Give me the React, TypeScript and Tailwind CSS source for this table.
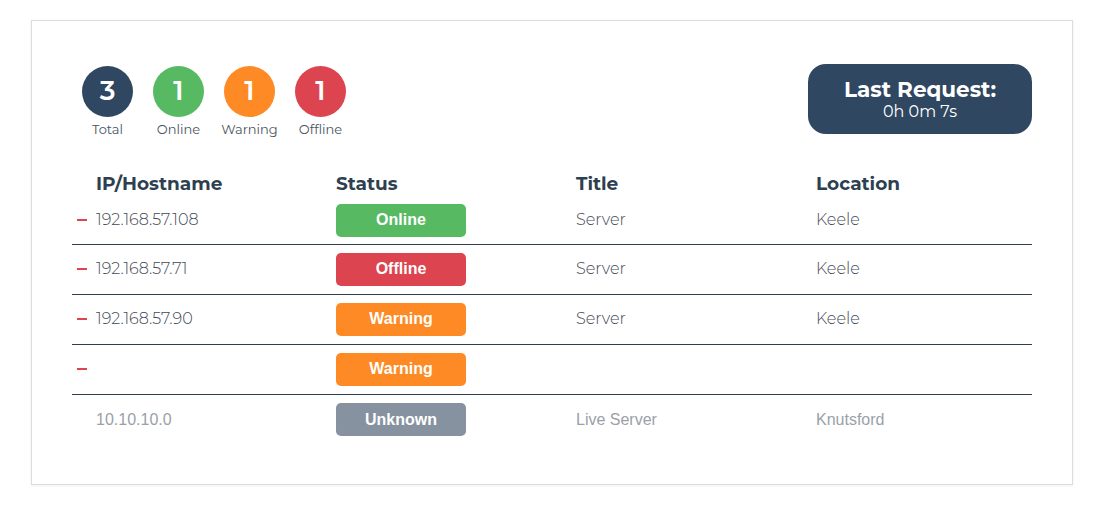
import type { ReactNode } from 'react';

type Status = 'Online' | 'Offline' | 'Warning' | 'Unknown';

type Host = { ip: string; status: Status; title: string; location: string; removable: boolean };

const hosts: Host[] = [
  { ip: '192.168.57.108', status: 'Online', title: 'Server', location: 'Keele', removable: true },
  { ip: '192.168.57.71', status: 'Offline', title: 'Server', location: 'Keele', removable: true },
  { ip: '192.168.57.90', status: 'Warning', title: 'Server', location: 'Keele', removable: true },
  { ip: '', status: 'Warning', title: '', location: '', removable: true },
  { ip: '10.10.10.0', status: 'Unknown', title: 'Live Server', location: 'Knutsford', removable: false },
];

const badge: Record<Status, string> = {
  Online: 'bg-[#57ba63]',
  Offline: 'bg-[#dc4450]',
  Warning: 'bg-[#fd8a25]',
  Unknown: 'bg-[#86929f]',
};

const heading = "font-['Montserrat','Open_Sans','Liberation_Sans',sans-serif]";
const arial = "font-['Liberation_Sans',Arial,sans-serif]";

function Counter({ value, label, color }: { value: number; label: string; color: string }) {
  return (
    <div className="flex w-[51px] flex-col items-center">
      <div className={`flex h-[51px] w-[51px] items-center justify-center rounded-full text-[27px] font-semibold text-white ${color}`}>
        {value}
      </div>
      <span className="mt-[3px] whitespace-nowrap text-[13px] text-[#4a5560]">{label}</span>
    </div>
  );
}

function Cell({ children, className = '' }: { children?: ReactNode; className?: string }) {
  return <div className={`flex items-center ${className}`}>{children}</div>;
}

export default function App() {
  return (
    <div className={`min-h-[518px] bg-white pl-[31px] pr-[31px] pt-[20px] ${heading}`}>
      <div className="h-[465px] w-[1042px] border border-[#dcdcdc] bg-white shadow-[0_1px_3px_rgba(0,0,0,0.06)]">
        <div className="flex items-start justify-between pl-[50px] pr-[40px] pt-[43px]">
          <div className="mt-[2px] flex gap-[20px]">
            <Counter value={3} label="Total" color="bg-[#2f4760]" />
            <Counter value={1} label="Online" color="bg-[#57ba63]" />
            <Counter value={1} label="Warning" color="bg-[#fd8a25]" />
            <Counter value={1} label="Offline" color="bg-[#dc4450]" />
          </div>
          <div className="flex h-[70px] w-[224px] flex-col items-center justify-center rounded-[18px] bg-[#2f4760] text-white">
            <span className="text-[21.5px] font-bold leading-[25px]">Last Request:</span>
            <span className="text-[16px] leading-[20px]">0h 0m 7s</span>
          </div>
        </div>

        <div className="mt-[31px] pl-[40px] pr-[40px]">
          <div className="grid grid-cols-[24px_240px_240px_240px_1fr] text-[18.5px] font-bold text-[#2d3f50]">
            <div />
            <div className="h-[26px] leading-[26px]">IP/Hostname</div>
            <div className="h-[26px] leading-[26px]">Status</div>
            <div className="h-[26px] leading-[26px]">Title</div>
            <div className="h-[26px] leading-[26px]">Location</div>
          </div>
          {hosts.map((h, i) => {
            const muted = h.status === 'Unknown';
            const txt = muted ? `${arial} text-[#9aa1a8] text-[16px]` : 'text-[16px] font-light text-[#3f4a55]';
            return (
              <div
                key={i}
                className={`grid grid-cols-[24px_240px_240px_240px_1fr] ${i < hosts.length - 1 ? 'border-b border-[#2d3f50]' : ''} ${i === 0 ? 'h-[48px]' : 'h-[50px]'}`}
              >
                <Cell>
                  {h.removable && <span className="ml-[5px] block h-[2px] w-[10px] bg-[#dc4450]" />}
                </Cell>
                <Cell className={txt}>{h.ip}</Cell>
                <Cell>
                  <span
                    className={`flex h-[33px] w-[130px] items-center justify-center rounded-[5px] text-[16px] font-bold text-white ${arial} ${badge[h.status]}`}
                  >
                    {h.status}
                  </span>
                </Cell>
                <Cell className={txt}>{h.title}</Cell>
                <Cell className={txt}>{h.location}</Cell>
              </div>
            );
          })}
        </div>
      </div>
    </div>
  );
}
